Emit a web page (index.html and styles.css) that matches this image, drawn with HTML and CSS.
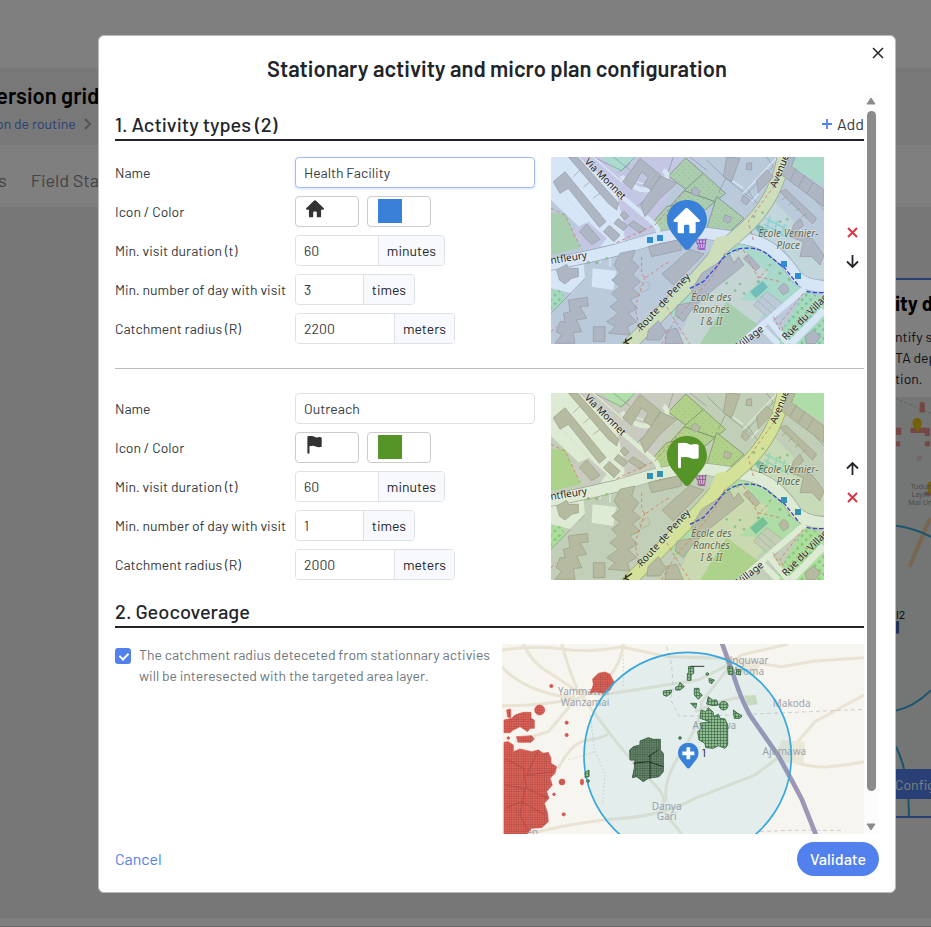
FILE: index.html
```html
<!DOCTYPE html>
<html lang="en">
<head>
    <meta charset="UTF-8">
    <meta name="viewport" content="width=device-width, initial-scale=1.0">
    <title>Micro plan configuration</title>
    <link rel="stylesheet" href="styles.css">
</head>
<body>
    <!-- shared drawings -->
    <svg class="defs" width="0" height="0" aria-hidden="true">
        <defs>
            <pattern id="dots" width="18" height="18" patternUnits="userSpaceOnUse">
                <rect width="18" height="18" fill="#c8e0a4"/>
                <circle cx="4" cy="5" r="1" fill="#76a860"/>
                <circle cx="13" cy="14" r="1" fill="#76a860"/>
            </pattern>
            <pattern id="shrubs" width="26" height="26" patternUnits="userSpaceOnUse">
                <rect width="26" height="26" fill="#c0f0b8"/>
                <circle cx="6" cy="7" r="4" fill="#8fcb86"/>
                <circle cx="19" cy="19" r="4" fill="#8fcb86"/>
            </pattern>
            <pattern id="red-grid" width="7" height="7" patternUnits="userSpaceOnUse">
                <rect width="7" height="7" fill="#e0635a"/>
                <path d="M0 0H7M0 0V7" stroke="#93403b" stroke-width="2"/>
            </pattern>
            <pattern id="green-grid" width="9" height="9" patternUnits="userSpaceOnUse">
                <rect width="9" height="9" fill="#8fbf90"/>
                <path d="M0 0H9M0 0V9" stroke="#2c5236" stroke-width="3"/>
            </pattern>
            <pattern id="dark-grid" width="7" height="7" patternUnits="userSpaceOnUse">
                <rect width="7" height="7" fill="#67876b"/>
                <path d="M0 0H7M0 0V7" stroke="#2b4634" stroke-width="2"/>
            </pattern>
        </defs>

        <symbol id="town" viewBox="33 21 819 561">
            <rect x="33" y="21" width="819" height="561" fill="#dddcdc"/>
            <!-- areas -->
            <path fill="#e8d9e6" d="M33 21H480L390 125 335 225 345 250 180 292 33 130Z"/>
            <path fill="#c8f0cc" d="M185 21H290L245 65 225 60Z"/>
            <path fill="#fff" d="M33 21H110L230 135 250 215 255 278 215 285 33 95Z"/>
            <path fill="#fff" d="M33 95 215 285 180 290 33 150Z"/>
            <path fill="#e8d9e6" d="M95 240 145 215 200 265 180 292 140 300Z"/>
            <path fill="#c4e2a4" d="M33 190H75L120 295 33 315Z"/>
            <g fill="url(#dots)" stroke="#77836a" stroke-width="2">
                <path d="M437 24 490 70 440 120 385 78Z"/>
                <path d="M490 70 557 130 525 155 432 122Z"/>
                <path d="M432 122 525 155 495 180 450 155 380 180Z"/>
                <path d="M340 215 380 170 450 155 480 240 360 245Z"/>
                <path d="M530 140 612 205 565 248 500 236Z"/>
            </g>
            <path fill="#c5efc8" d="M748 21H852V108L750 50Z"/>
            <path fill="#e5edde" d="M620 230 690 140 852 310V385L805 395 735 300 630 255Z"/>
            <path fill="#c5efc8" d="M560 288 610 280 700 320 785 415 690 500 410 510 380 478Z"/>
            <path fill="#e9ead2" d="M470 400 600 290 685 370 600 450 690 455 670 490 605 582H410L440 510Z"/>
            <path fill="#c4e2a4" d="M560 455 662 530 610 582H480Z"/>
            <path fill="url(#shrubs)" d="M795 425 852 440V582H700Z"/>
            <path fill="url(#shrubs)" d="M33 430 60 400 75 450 33 490Z"/>
            <path fill="none" stroke="#a5e5d4" stroke-width="5" d="M675 205 790 262M672 222 745 265M690 200 680 235M712 212 702 248M735 222 722 258"/>
            <path fill="#80ccb4" d="M630 425 668 393 684 412 647 445ZM642 230 655 222 685 240 668 262Z"/>
            <path fill="#fff" d="M158 355 228 363 220 420 155 410ZM45 345 130 330 135 385 95 430 33 415V350Z"/>
            <g fill="#dedcd8" stroke="#b8b4b0" stroke-width="2">
                <path d="M640 465 680 425 735 465 700 515Z"/>
                <path d="M653 453 712 503M665 440 723 490M298 412 320 395Q335 400 325 418L305 428Z"/>
            </g>
            <!-- minor lines -->
            <g fill="none" stroke="#9a9a98" stroke-width="2">
                <path d="M160 21 245 62M245 62 285 21M585 21 557 85 640 150M612 140 700 50 680 21M750 70 852 140M500 30 557 85 535 130M400 21 375 95 280 180M33 490 135 385M620 115 650 160M770 90 852 180M220 21 270 60M450 21 500 60M240 65 270 40"/>
            </g>
            <g fill="none" stroke="#fff" stroke-width="4">
                <path d="M610 130 712 21M635 155 720 55M745 85 852 160M560 80 610 115M180 340 185 315M210 350V305M240 80 370 120M160 21 250 100"/>
            </g>
            <!-- streets -->
            <g fill="none" stroke-linejoin="round">
                <path id="street" d="M20 345Q130 325 230 300L330 270Q420 245 500 250L590 262Q670 272 710 310T765 375Q790 408 860 410" stroke="#b0aeac" stroke-width="38"/>
                <path d="M20 345Q130 325 230 300L330 270Q420 245 500 250L590 262Q670 272 710 310T765 375Q790 408 860 410" stroke="#fff" stroke-width="34"/>
                <path d="M110 25 335 215Q360 235 355 262M245 80Q300 140 350 110T370 60" stroke="#fff" stroke-width="14"/>
                <path d="M600 582 690 505 795 415M690 515 745 582M668 535 715 582" stroke="#fff" stroke-width="18"/>
                <path d="M752 582 852 480" stroke="#fff" stroke-width="22"/>
                <path d="M258 595 465 387Q500 350 540 300L612 238Q665 190 695 130T733 10" stroke="#a9ab82" stroke-width="42"/>
                <path d="M500 330 528 262 575 255 600 275 545 310Z" fill="#f3f5b5"/>
                <path d="M258 595 465 387Q500 350 540 300L612 238Q665 190 695 130T733 10" stroke="#f3f5b5" stroke-width="38"/>
            </g>
            <!-- buildings -->
            <g fill="#cdc4be" stroke="#a99f98" stroke-width="2">
                <path d="M85 21H112L236 160 230 180 205 160Z"/>
                <path d="M40 95 75 65 198 215 178 232 85 115 60 130Z"/>
                <path d="M190 245 208 226 240 255 222 275ZM222 220 235 205 263 228 250 242ZM240 195 252 183 267 198 255 210ZM265 225 280 212 318 238 300 250ZM118 245 140 222 180 268 155 284Z"/>
                <path d="M248 95 300 25 362 75 335 120 310 105 325 82 305 65 275 118Z"/>
                <path d="M302 165 362 78 410 100 360 145 315 200Z"/>
                <path d="M560 21 600 25 575 95 550 80ZM620 40 635 38V60L618 58ZM650 90 680 60 700 80 655 130ZM455 118 465 110 482 125 473 138 455 132ZM380 195 400 180V210H382ZM555 195 575 202 570 218 550 214ZM610 135 630 150 618 165 603 152Z"/>
                <path d="M745 21H765L755 50 852 120V170L725 75Z"/>
                <path d="M720 125 738 118 830 205 818 222Z"/>
                <path d="M325 290 420 268 425 300 335 320Z"/>
                <path d="M366 372 450 298 492 312 400 405Z"/>
                <path d="M240 310 285 300 275 330 297 350 278 375 302 395 278 415 300 435 270 450 293 475 265 490 290 515 262 530 270 555 205 550 225 530 200 515 235 490 210 470 235 450 215 430 240 410 215 390 240 370 222 345Z"/>
                <path d="M85 450 142 442 145 468 120 470 140 505 110 510 125 545 100 548 105 580H45L65 555 48 545 60 515 75 515 70 490 90 485ZM160 530 195 530V575H160Z"/>
                <path d="M50 360 80 343 85 355 115 355V380L95 385 75 402 58 390Z"/>
                <path d="M485 370 570 315 582 340 595 320 612 345 500 435 455 480 430 515 405 495 412 465 465 455 455 420Z"/>
                <path d="M610 325 625 313 660 350 648 362ZM760 225 780 205 790 225 775 240 790 260 815 265 852 315 840 345 815 320 780 320 790 275 750 260ZM325 540 355 512 378 545 360 570 320 570ZM380 540 410 535 430 582H375ZM795 560 820 540 842 560 825 582H800Z"/>
                <path d="M715 415 730 400Q748 405 745 425L730 435Z"/>
            </g>
            <path d="M770 55 750 90M795 75 775 110M820 98 800 132M740 140 725 150M760 155 745 165M780 175 765 183M800 192 785 200M120 60 100 80M150 95 130 112M180 130 160 145" stroke="#a99f98" stroke-width="2"/>
            <!-- trees -->
            <g fill="#9fce90">
                <circle cx="600" cy="402" r="4"/><circle cx="612" cy="430" r="4"/><circle cx="585" cy="422" r="4"/><circle cx="690" cy="345" r="4"/><circle cx="720" cy="370" r="5"/><circle cx="655" cy="395" r="5"/><circle cx="748" cy="388" r="5"/><circle cx="642" cy="200" r="4"/><circle cx="668" cy="188" r="4"/><circle cx="720" cy="215" r="4"/><circle cx="742" cy="208" r="4"/><circle cx="145" cy="338" r="5"/><circle cx="170" cy="338" r="5"/><circle cx="200" cy="325" r="4"/><circle cx="592" cy="300" r="5"/><circle cx="560" cy="400" r="4"/>
            </g>
            <!-- footpaths and cycle way -->
            <g fill="none" stroke="#f08a78" stroke-width="3" stroke-dasharray="10 8">
                <path d="M33 175 75 195 120 290M305 320V370L315 385 370 345 390 335M315 380 285 470 300 550M365 582 400 520 520 375 560 300M640 270 625 215 715 90M380 470 410 520 450 582M230 278 345 225 432 125M610 300 655 385 690 350M655 380 720 395M700 500 720 540M790 430 720 520 740 560 820 470M33 545 50 530"/>
                <path stroke="#3434e8" stroke-width="4" stroke-dasharray="13 6" d="M450 415 490 395 530 350Q560 300 610 295T690 320L735 355 778 410M800 424Q820 430 852 427"/>
            </g>
            <g fill="none" stroke="#b040b8" stroke-width="3">
                <path d="M462 272 470 275 478 295H494L498 265M468 270H498M470 280H497M478 270 482 292M488 268V292M472 292 476 298H496"/>
            </g>
            <!-- stops -->
            <path fill="#2e90d8" d="M321 261h18v18h-18zM351 255h18v18h-18zM723 333h18v18h-18zM765 369h18v18h-18z"/>
        </symbol>

        <symbol id="town-labels" viewBox="33 21 819 561">
            <g class="map-text">
                <text transform="translate(132 37) rotate(45)">Via Monnet</text>
                <text transform="translate(33 342) rotate(-9)">ntfleury</text>
                <text transform="translate(305 544) rotate(-48)">Route de Peney</text>
                <text transform="translate(708 115) rotate(-68)">Avenue</text>
                <text transform="translate(599 598) rotate(-38)">Village</text>
                <text transform="translate(738 572) rotate(-45)">Rue du Village</text>
            </g>
            <g class="map-place">
                <text x="745" y="260">École Vernier-</text>
                <text x="745" y="297">Place</text>
                <text x="514" y="452">École des</text>
                <text x="514" y="488">Ranches</text>
                <text x="514" y="524">I &amp; II</text>
            </g>
            <path d="M250 580 276 562M256 578 258 566M256 578 267 582" stroke="#333320" stroke-width="4"/>
        </symbol>

        <symbol id="pin" viewBox="0 0 120 150">
            <path d="M60 0C26 0 0 26 0 60 0 85 20 106 33 122L52 146Q60 154 68 146L87 122C100 106 120 85 120 60 120 26 94 0 60 0Z"/>
        </symbol>
        <symbol id="home" viewBox="0 0 80 78">
            <path d="M40 0Q43 0 45 2L79 36Q82 42 75 42H67V72Q67 76 62 76H48V54Q48 50 44 50H36Q32 50 32 54V76H18Q13 76 13 72V42H5Q-2 42 1 36L35 2Q37 0 40 0Z"/>
        </symbol>
        <symbol id="flag" viewBox="0 0 66 78">
            <path d="M0 4Q0 0 5 0 24-1 31 3 38 8 46 5 55 3 62 7V44Q62 48 57 48 45 50 36 45 28 41 9 44V73Q9 77 5 77 0 77 0 73Z"/>
        </symbol>
    </svg>

    <div class="page">
        <header class="page-header">
            <h2>ersion grid</h2>
            <nav>
                <a href="#">on de routine</a>
                <svg width="8" height="12" viewBox="0 0 8 12"><path d="M1 1 6 6 1 11" fill="none" stroke="#aaa" stroke-width="2"/></svg>
            </nav>
        </header>
        <div class="tabs"><a href="#">s</a><a href="#">Field Sta</a></div>
        <main class="page-main">
            <section class="step">
                <h3>ity d</h3>
                <p>ntify s<br>TA dep<br>tion.</p>
                <div class="step-map">
                    <svg viewBox="0 0 35 420" preserveAspectRatio="xMinYMin slice">
                        <rect width="35" height="420" fill="#e6ecea"/>
                        <path d="M0 1 35 16" stroke="#c9c6b8" stroke-dasharray="3 2"/>
                        <path fill="#e88f88" d="M0 30H6V37H0ZM1 43H5V48H1ZM24 5H29V15H24ZM15 30H34V35H15ZM29 34H34V38H29ZM29 43H34V48H29ZM29 92H35V96H29Z"/>
                        <path fill="#e6cfcb" d="M21 57H26V62H21Z"/>
                        <path d="M14 165 34 118" stroke="#f0cfa0" stroke-width="4"/>
                        <path d="M0 125Q20 128 35 136M0 305Q18 302 35 285" fill="none" stroke="#38a8dc" stroke-width="2"/>
                        <path d="M1 340Q16 370 13 420" fill="none" stroke="#38a8dc" stroke-width="2"/>
                        <path fill="#e8c010" d="M22 34Q17 29 17 25A4 4 0 0 1 26 25Q26 29 22 34ZM35 95Q31 91 31 87T35 82Z"/>
                        <g class="step-places"><text x="15" y="89">Tudun</text><text x="16" y="97">Layin</text><text x="13" y="105">Mai Un</text></g>
                        <text class="step-count" x="1" y="216">l2</text>
                        <path fill="#46a" d="M0 218H4V230H0Z"/>
                    </svg>
                    <button type="button">Config</button>
                </div>
            </section>
        </main>
        <footer class="page-footer"></footer>
    </div>

    <div class="backdrop">
        <div class="modal" role="dialog" aria-labelledby="modal-title">
            <button type="button" class="close" aria-label="Close">
                <svg width="12" height="12" viewBox="0 0 12 12"><path d="M1 1 11 11M11 1 1 11" stroke="#212529" stroke-width="1.500"/></svg>
            </button>
            <h1 id="modal-title">Stationary activity and micro plan configuration</h1>

            <div class="modal-scroll">
                <div class="modal-body">
                    <div class="section-title">
                        <h2>1. Activity types (2)</h2>
                        <button type="button" class="add">
                            <svg width="12" height="12" viewBox="0 0 12 12"><path d="M6 1V11M1 6H11" stroke="#5280ec" stroke-width="1.800"/></svg>Add
                        </button>
                    </div>

                    <div class="activity">
                        <div class="fields">
                            <label for="name1">Name</label>
                            <input id="name1" class="text focused" type="text" value="Health Facility">
                            <label for="icon1">Icon / Color</label>
                            <div class="pickers">
                                <button type="button" id="icon1" class="picker" aria-label="Icon"><svg class="glyph" width="18" height="18"><use href="#home"/></svg></button>
                                <button type="button" class="picker" aria-label="Color"><span class="swatch blue"></span></button>
                            </div>
                            <label for="duration1">Min. visit duration (t)</label>
                            <div class="group minutes"><input id="duration1" type="text" value="60"><span>minutes</span></div>
                            <label for="days1">Min. number of day with visit</label>
                            <div class="group times"><input id="days1" type="text" value="3"><span>times</span></div>
                            <label for="radius1">Catchment radius (R)</label>
                            <div class="group meters"><input id="radius1" type="text" value="2200"><span>meters</span></div>
                        </div>
                        <svg class="town-map" viewBox="33 21 819 561" preserveAspectRatio="xMidYMid slice">
                            <use href="#town" x="33" y="21" width="819" height="561"/>
                            <rect x="33" y="21" width="819" height="561" fill="#3880d8" opacity=".2"/>
                            <use href="#town-labels" x="33" y="21" width="819" height="561"/>
                            <use href="#pin" x="381" y="150" width="120" height="150" fill="#3880d8"/>
                            <use href="#home" x="400" y="174" width="80" height="78" fill="#fff"/>
                        </svg>
                        <div class="actions">
                            <button type="button" aria-label="Remove"><svg width="13" height="13" viewBox="0 0 13 13"><path d="M2 2 11 11M11 2 2 11" stroke="#dc3545" stroke-width="2"/></svg></button>
                            <button type="button" aria-label="Move down"><svg width="13" height="13" viewBox="0 0 13 13"><path d="M6.500 0V12M1 6.500 6.500 12 12 6.500" fill="none" stroke="#212529" stroke-width="1.800"/></svg></button>
                        </div>
                    </div>

                    <hr>

                    <div class="activity">
                        <div class="fields">
                            <label for="name2">Name</label>
                            <input id="name2" class="text" type="text" value="Outreach">
                            <label for="icon2">Icon / Color</label>
                            <div class="pickers">
                                <button type="button" id="icon2" class="picker" aria-label="Icon"><svg class="glyph" width="18" height="18"><use href="#flag"/></svg></button>
                                <button type="button" class="picker" aria-label="Color"><span class="swatch green"></span></button>
                            </div>
                            <label for="duration2">Min. visit duration (t)</label>
                            <div class="group minutes"><input id="duration2" type="text" value="60"><span>minutes</span></div>
                            <label for="days2">Min. number of day with visit</label>
                            <div class="group times"><input id="days2" type="text" value="1"><span>times</span></div>
                            <label for="radius2">Catchment radius (R)</label>
                            <div class="group meters"><input id="radius2" type="text" value="2000"><span>meters</span></div>
                        </div>
                        <svg class="town-map" viewBox="33 21 819 561" preserveAspectRatio="xMidYMid slice">
                            <use href="#town" x="33" y="21" width="819" height="561"/>
                            <rect x="33" y="21" width="819" height="561" fill="#579428" opacity=".2"/>
                            <use href="#town-labels" x="33" y="21" width="819" height="561"/>
                            <use href="#pin" x="381" y="150" width="120" height="150" fill="#579428"/>
                            <use href="#flag" x="414" y="170" width="66" height="78" fill="#fff"/>
                        </svg>
                        <div class="actions">
                            <button type="button" aria-label="Move up"><svg width="13" height="13" viewBox="0 0 13 13"><path d="M6.500 13V1M1 6.500 6.500 1 12 6.500" fill="none" stroke="#212529" stroke-width="1.800"/></svg></button>
                            <button type="button" aria-label="Remove"><svg width="13" height="13" viewBox="0 0 13 13"><path d="M2 2 11 11M11 2 2 11" stroke="#dc3545" stroke-width="2"/></svg></button>
                        </div>
                    </div>

                    <div class="section-title">
                        <h2>2. Geocoverage</h2>
                    </div>

                    <div class="coverage">
                        <div class="check">
                            <input type="checkbox" id="intersect" checked>
                            <label for="intersect">The catchment radius deteceted from stationnary activies will be interesected with the targeted area layer.</label>
                        </div>
                        <svg class="coverage-map" viewBox="21 27 1086 570" preserveAspectRatio="xMidYMin slice">
                            <rect x="21" y="27" width="1086" height="570" fill="#f7f5f0"/>
                            <g fill="none" stroke="#e8e3d3" stroke-width="9">
                                <path d="M21 45Q120 30 200 42T380 36L520 65 690 70 860 95 960 78 1107 68"/>
                                <path d="M85 27Q110 80 150 105T240 165L320 180 450 160 610 135 690 95 740 60 880 27"/>
                                <path d="M200 27Q220 100 250 170L340 290Q400 370 480 450 520 490 500 520L560 597"/>
                                <path d="M21 95Q60 140 130 165T240 185M385 27Q375 110 300 165L240 195 160 290 60 320"/>
                                <path d="M21 212Q130 215 250 190M345 290Q330 310 280 315T190 400"/>
                                <path d="M515 500Q500 440 560 350T620 200L700 100"/>
                                <path d="M100 597Q250 560 380 550T600 490L780 420 900 330 960 260 1107 180"/>
                                <path d="M870 370Q940 400 1000 395T1107 380M600 230Q680 190 760 185"/>
                            </g>
                            <g fill="none" stroke="#cfcfcf" stroke-width="3" stroke-dasharray="12 9">
                                <path d="M515 35 530 90 535 170 525 190 552 243 610 243 780 237 1107 223M795 590 880 586 1040 586"/>
                                <path stroke="#d8d4c4" stroke-dasharray="5 6" d="M385 60V160M285 240 298 340 330 420 322 505M220 375 300 350"/>
                            </g>
                            <path fill="#ece8d8" d="M730 70 800 85 780 120 715 105ZM860 315 930 320 925 385 870 385 845 350Z"/>
                            <path fill="#d9dfbd" d="M750 182 782 180 788 208 755 212Z"/>
                            <path d="M680 22 712 110Q745 215 775 255L850 362Q890 435 920 492L965 605" fill="none" stroke="#9d96b4" stroke-width="14"/>
                            <g class="map-city">
                                <text x="268" y="180">Yammawar</text><text x="270" y="212">Wanzamai</text>
                                <text x="755" y="87">Unguwar</text><text x="760" y="119">Aroma</text>
                                <text x="890" y="216">Makoda</text><text x="658" y="281">Ajumawa</text>
                                <text x="868" y="360">Ajumawa</text>
                                <text x="515" y="524">Danya</text><text x="515" y="556">Gari</text><text x="112" y="602">en</text>
                            </g>
                            <g fill="url(#red-grid)" stroke="#d9554c" stroke-width="2">
                                <path d="M27 322 40 320 55 330V350L75 342 110 350 130 345 145 355 160 352 168 370V385L185 395 180 415 165 430 172 450 155 470 162 490 148 505 158 535 160 560 140 578 110 580 95 597H27Z"/>
                                <path d="M27 255 50 250 60 240 85 232H108V250L118 255V280H105L98 290 75 275 55 285 45 293H27ZM64 305 110 302 118 312 108 322H70ZM35 225 47 222V248L38 246Z"/>
                                <path d="M285 175 295 150 293 132 310 115 330 111 345 118 352 132 358 142 345 165 325 175 300 170Z"/>
                                <circle cx="134" cy="225" r="15"/><circle cx="169" cy="153" r="5"/><circle cx="215" cy="263" r="5"/><circle cx="215" cy="300" r="5"/><circle cx="40" cy="309" r="4"/><circle cx="201" cy="441" r="9"/><ellipse cx="261" cy="441" rx="5" ry="9"/><circle cx="206" cy="538" r="5"/><circle cx="177" cy="478" r="4"/>
                            </g>
                            <path d="M30 370 85 400 95 460 160 490M30 450 90 460 75 540 100 590M130 345 95 420 175 410M30 520 80 500 150 540" fill="none" stroke="#a8433d" stroke-width="2"/>
                            <circle cx="578" cy="363" r="311" fill="#38b0d0" fill-opacity=".1" stroke="#38a8dc" stroke-width="5"/>
                            <path fill="url(#dark-grid)" stroke="#41644a" stroke-width="3" d="M404 345 415 335 435 330V318L460 308 475 313H496V345L505 355V410L492 425 460 430 445 440 425 425 412 428 418 400 420 375 405 375Z"/>
                            <path d="M415 385 460 380 505 395M465 360V430M490 345 460 365" stroke="#203527" stroke-width="3" fill="none"/>
                            <g fill="url(#green-grid)" stroke="#41704a" stroke-width="3">
                                <path d="M618 225 632 230 640 218 655 232V245L670 238 675 250 690 252 698 270V330L690 340 670 332 655 340 632 338 630 325 612 315 608 290 620 280 615 265 645 260 615 250Z"/>
                                <path d="M580 95H596V115L588 120V136H577V115H582ZM555 142 568 155 555 165H542V156L550 154ZM505 168 530 165 528 175 515 184 505 180ZM598 160H612V172L622 180 610 193 598 180ZM640 185 652 195H665L670 210 655 212 635 207ZM715 225 728 235 741 243 735 250H718ZM642 130 658 135 650 146 643 142ZM587 205 605 205 602 220ZM698 95 712 96 714 118H700ZM725 103 737 105V120L724 118ZM270 412 282 405V425L270 427Z"/>
                                <circle cx="686" cy="212" r="13"/><circle cx="637" cy="117" r="4"/><circle cx="555" cy="309" r="4"/><circle cx="279" cy="438" r="4"/>
                            </g>
                            <path d="M586 94H628" stroke="#333" stroke-width="3"/>
                            <use href="#pin" x="549" y="323" width="62" height="78" fill="#3880d8"/>
                            <path d="M562 355H598M580 337V373" stroke="#fff" stroke-width="11"/>
                            <text class="map-count" x="620" y="365">1</text>
                        </svg>
                    </div>
                </div>
                <div class="scrollbar" aria-hidden="true">
                    <svg width="10" height="8" viewBox="0 0 10 8"><path d="M5 1 9 7H1Z" fill="#8b8b8b" stroke="#8b8b8b" stroke-linejoin="round"/></svg>
                    <span class="thumb"></span>
                    <svg width="10" height="8" viewBox="0 0 10 8"><path d="M5 7 9 1H1Z" fill="#8b8b8b" stroke="#8b8b8b" stroke-linejoin="round"/></svg>
                </div>
            </div>

            <div class="modal-footer">
                <a href="#">Cancel</a>
                <button type="button" class="validate">Validate</button>
            </div>
        </div>
    </div>
</body>
</html>
```
FILE: styles.css
```css
* {
    box-sizing: border-box;
}
body {
    margin: 0;
    font-family: Barlow, Roboto, sans-serif;
    font-size: 14px;
    line-height: 21px;
    color: #212529;
    overflow: hidden;
}
h1, h2, h3, p {
    margin: 0;
    font-weight: 500;
}
a {
    color: #5280ec;
    text-decoration: none;
}
button {
    padding: 0;
    border: 0;
    background: none;
    font: inherit;
    color: inherit;
    cursor: pointer;
}
svg {
    display: block;
}
.defs {
    position: absolute;
}

/* page behind the dialog */
.page {
    display: flex;
    flex-direction: column;
    min-height: 100vh;
    padding-top: 68px;
    background: #fff;
}
.page-header {
    height: 77px;
    margin-left: -4px;
    padding-top: 12px;
    background: #f0f0f0;
}
.page-header h2 {
    font-size: 22px;
    font-weight: 600;
    line-height: 30px;
    color: #000;
}
.page-header nav {
    display: flex;
    align-items: center;
    gap: 8px;
    padding-top: 3px;
}
.tabs {
    display: flex;
    gap: 24px;
    height: 62px;
    margin-left: -2px;
    font-size: 18px;
    line-height: 70px;
}
.tabs a {
    color: #888;
}
.page-main {
    display: flex;
    flex: 1;
    justify-content: flex-end;
    align-items: flex-start;
    padding-top: 71px;
    background: #eee;
}
.step {
    width: 36px;
    overflow: hidden;
    padding-top: 12px;
    border-top: 2px solid #5280ec;
    border-bottom: 2px solid #5280ec;
    background: #fff;
    white-space: nowrap;
}
.step h3 {
    font-size: 20px;
    font-weight: 700;
    line-height: 22px;
    color: #000;
}
.step p {
    padding: 12px 0 8px;
    font-weight: 400;
}
.step-map {
    position: relative;
}
.step-map svg {
    width: 100%;
    height: 419px;
}
.step-map button {
    position: absolute;
    left: 0;
    bottom: 17px;
    width: 100%;
    height: 30px;
    background: #5280ec;
    color: #fff;
}
.step-places {
    font-family: "Noto Sans", sans-serif;
    font-size: 7px;
    fill: #999;
}
.step-count {
    font-size: 12px;
}
.page-footer {
    height: 9px;
    border-bottom: 1px solid #ccc;
}

/* dialog */
.backdrop {
    position: fixed;
    inset: 0;
    padding: 35px 35px 34px 98px;
    background: rgba(0,0,0,0.5);
}
.modal {
    position: relative;
    padding: 16px;
    border: 1px solid #bbb;
    border-radius: 6px;
    background: #fff;
}
.modal h1 {
    padding-bottom: 8px;
    font-size: 22px;
    font-weight: 600;
    line-height: 33px;
    text-align: center;
}
.close {
    position: absolute;
    top: 11px;
    right: 11px;
}
.modal-scroll {
    display: flex;
}
.modal-body {
    flex: 1;
    min-width: 0;
}
.scrollbar {
    display: flex;
    flex-direction: column;
    align-items: center;
    width: 15px;
    padding: 4px 1px 3px 0;
    background: #fcfcfc;
}
.thumb {
    width: 9px;
    height: 680px;
    margin: 6px 0 auto;
    border-radius: 5px;
    background: #8b8b8b;
}
.section-title {
    display: flex;
    justify-content: space-between;
    align-items: flex-end;
    margin-bottom: 16px;
    padding-top: 16px;
    border-bottom: 2px solid #212529;
}
.section-title h2 {
    font-size: 20px;
    line-height: 30px;
}
.add {
    display: flex;
    align-items: center;
    gap: 4px;
    font-size: 16px;
    line-height: 30px;
    color: #343a40;
}
.activity {
    display: flex;
}
.fields {
    display: grid;
    flex: 1;
    grid-template-columns: 180px 1fr;
    gap: 8px 0;
    margin-right: 16px;
    align-items: center;
}
.fields label {
    color: #343a40;
}
.text, .group {
    height: 31px;
    border: 1px solid #dee2e6;
    border-radius: 4px;
}
.text, .group input {
    padding: 0 8px;
    background: #fff;
    font: inherit;
    color: #343a40;
}
.text {
    width: 100%;
}
.text.focused {
    border-color: #a3bcf5;
    box-shadow: 0 1px 3px rgba(82,128,236,0.25);
}
.pickers {
    display: flex;
    gap: 8px;
}
.picker {
    display: flex;
    align-items: flex-start;
    width: 64px;
    height: 31px;
    padding: 2px 10px;
    border: 1px solid #ccc;
    border-radius: 4px;
}
.glyph {
    margin-top: 1px;
    fill: #333;
}
.swatch {
    width: 24px;
    height: 24px;
}
.blue {
    background: #3880d8;
}
.green {
    background: #579428;
}
.group {
    display: flex;
    overflow: hidden;
}
.group input {
    flex: 1;
    min-width: 0;
    border: 0;
}
.group span {
    padding: 0 8px;
    border-left: 1px solid #dee2e6;
    background: #f8f9fc;
    line-height: 30px;
}
.minutes {
    width: 150px;
}
.times {
    width: 120px;
}
.meters {
    width: 160px;
}
.town-map {
    width: 273px;
    height: 187px;
}
.map-text, .map-place {
    font-family: "Noto Sans", sans-serif;
    font-size: 30px;
    fill: #222;
    stroke: #fff;
    stroke-opacity: 0.4;
    stroke-width: 4px;
    paint-order: stroke;
}
.map-place {
    font-style: italic;
    text-anchor: middle;
    fill: #5f664c;
}
.map-city {
    font-family: "Noto Sans", sans-serif;
    font-size: 30px;
    text-anchor: middle;
    fill: #a0a1aa;
}
.map-count {
    font-size: 36px;
    fill: #222;
}
.actions {
    display: flex;
    flex-direction: column;
    justify-content: center;
    align-items: flex-end;
    gap: 16px;
    width: 40px;
    padding: 0 5px 8px 0;
}
hr {
    margin: 24px 0;
    border: 0;
    border-top: 1px solid #bbb;
}
.coverage {
    display: flex;
    gap: 8px;
}
.check {
    display: flex;
    flex: 1;
    gap: 8px;
    align-items: flex-start;
}
.check label {
    color: #6c757d;
}
.check input {
    appearance: none;
    flex: none;
    width: 16px;
    height: 16px;
    margin: 4px 0 0;
    border-radius: 3px;
    background: #5280ec;
}
.check input:checked::before {
    content: "";
    display: block;
    width: 4px;
    height: 7px;
    margin: 3px 6px;
    border: solid #fff;
    border-width: 0 2px 2px 0;
    rotate: 45deg;
}
.coverage-map {
    width: 362px;
    height: 190px;
}
.modal-footer {
    display: flex;
    justify-content: space-between;
    align-items: center;
    padding-top: 8px;
    font-size: 16px;
    line-height: 32px;
}
.validate {
    width: 82px;
    height: 34px;
    border-radius: 17px;
    background: #5280ec;
    color: #fff;
    font-weight: 500;
}
```
